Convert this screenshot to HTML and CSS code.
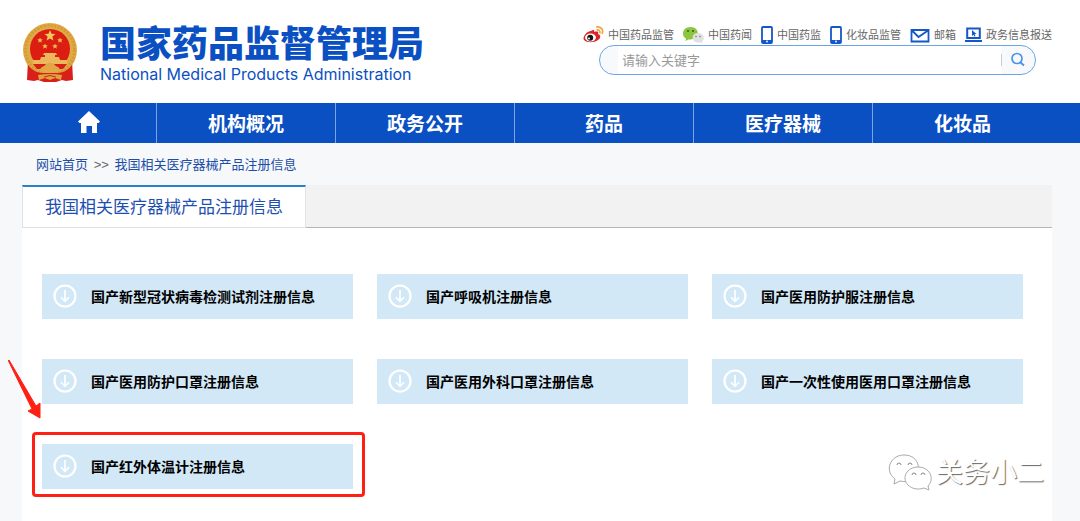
FILE: index.html
```html
<!DOCTYPE html>
<html lang="zh-CN">
<head>
<meta charset="utf-8">
<meta name="viewport" content="width=device-width, initial-scale=1">
<title>国家药品监督管理局</title>
<link rel="stylesheet" href="styles.css">
</head>
<body>
<svg class="defs" width="0" height="0" aria-hidden="true">
  <symbol id="phone" viewBox="0 0 12 18"><rect x="1" y="1" width="10" height="16" rx="1" fill="#fff" stroke="#1557c8" stroke-width="1.8"/><path d="M1 14h10v3H1z" fill="#1557c8"/><circle cx="6" cy="15.500" r=".9" fill="#fff"/></symbol>
  <symbol id="down" viewBox="0 0 24 24"><circle cx="12" cy="12" r="10.500" fill="none" stroke="#fff" stroke-width="2.200"/><path d="M12 6v11M8 13.300l4 4 4-4" fill="none" stroke="#fff" stroke-width="1.600"/></symbol>
</svg>

<header class="header wrap">
  <a class="brand" href="#">
    <svg class="emblem" viewBox="0 0 56 60" aria-hidden="true">
      <path d="M6 38L5 58l7 1 4-1 6 2h12l6-2 4 1 7-1-1-20z" fill="#d91f19"/>
      <circle cx="28" cy="28" r="27" fill="#e0aa45"/>
      <circle cx="28" cy="28" r="24.500" fill="none" stroke="#d39a38" stroke-width="3" stroke-dasharray="2 1.500"/>
      <circle cx="28" cy="27" r="20" fill="#dc1d12"/>
      <path d="M28 8l1.500 3.800 4 .2-3.100 2.600 1 4L28 16.400l-3.400 2.200 1-4-3.100-2.600 4-.2z" fill="#f4c95c"/>
      <g fill="#efbd50"><path id="star" d="M18 15.500l.8 1.800 2 .1-1.500 1.300.5 2-1.800-1.100-1.800 1.100.5-2-1.500-1.300 2-.1z"/><use href="#star" x="20"/><use href="#star" x="5" y="6"/><use href="#star" x="15" y="6"/></g>
      <path d="M22 31h12l1 2h-2v2h4l1 3h7v4H11v-4h7l1-3h4v-2h-2z" fill="#edb85b"/>
      <path d="M11 42h34l-4 5H15z" fill="#d72017"/>
      <path d="M18 48c1-4 4-3 5-5 3-3 7-3 10 0 1 2 4 1 5 5z" fill="#e2a744"/>
      <path d="M6 43q5 7 14 8h16q9-1 14-8v14l-8 1H14l-8-1z" fill="#d91f19"/>
      <path d="M16 53q12-2 24 0l-1 5-6-2-5 2-5-2-6 2z" fill="#dda541"/>
      <path d="M22 55q6-3 12 0" stroke="#c7281a" fill="none"/>
    </svg>
    <span class="brand-text">
      <span class="brand-cn">国家药品监督管理局</span>
      <span class="brand-en">National Medical Products Administration</span>
    </span>
  </a>
  <div class="tools">
    <nav class="quick" aria-label="快捷链接">
      <a href="#"><svg width="21" height="18" viewBox="0 0 21 18" aria-hidden="true"><path d="M8 5c2-2 4-1 3 1 4-1 5 0 4 2 3 1 3 4 0 6-4 3-11 3-14 0C-1 11 4 5 8 5z" fill="#d9252a"/><ellipse cx="7.500" cy="11.500" rx="5.500" ry="4" fill="#fff"/><circle cx="7.200" cy="11.800" r="3" fill="#151515"/><circle cx="6" cy="12.500" r="1" fill="#fff"/><path d="M13 1c5-1 8 3 6 7M13.500 4c2.500-.5 4 1 3.300 3.400" fill="none" stroke="#f2a33a" stroke-width="1.600"/></svg><span>中国药品监管</span></a>
      <a href="#"><svg width="21" height="18" viewBox="0 0 21 18" aria-hidden="true"><path d="M7.500 1C-1 1-2 10 3 12.500L2.500 15l3-1.600C17 15 18 1 7.500 1z" fill="#8cc63f"/><circle cx="5" cy="5" r="1" fill="#385a1c"/><circle cx="10" cy="5" r="1" fill="#385a1c"/><path d="M15 7c-7 0-7 9-.5 9.500l3-.1 2 1.100-.5-2C22.500 13 21 7 15 7z" fill="#e1e1e1"/><circle cx="13" cy="10.500" r=".8" fill="#777"/><circle cx="17" cy="10.500" r=".8" fill="#777"/></svg><span>中国药闻</span></a>
      <a href="#"><svg width="12" height="18" aria-hidden="true"><use href="#phone"/></svg><span>中国药监</span></a>
      <a href="#"><svg width="12" height="18" aria-hidden="true"><use href="#phone"/></svg><span>化妆品监管</span></a>
      <a href="#"><svg width="20" height="18" viewBox="0 0 20 18" aria-hidden="true"><path d="M1.500 4h17v11.500h-17zM2 4.500l6.500 6.500L18 4.500" fill="none" stroke="#1557c8" stroke-width="1.800"/></svg><span>邮箱</span></a>
      <a href="#"><svg width="17" height="18" viewBox="0 0 17 18" aria-hidden="true"><path d="M2.200 2.500h12.600v9.500H2.200zM0 15h17" fill="none" stroke="#1557c8" stroke-width="2"/><path d="M7 4v6l1.500-1.300 1 2 1-.6-1-1.800 2-.2z" fill="#1557c8"/></svg><span>政务信息报送</span></a>
    </nav>
    <form class="search" role="search">
      <input type="search" aria-label="搜索" placeholder="请输入关键字">
      <button type="button" aria-label="搜索"><svg width="16" height="16" viewBox="0 0 16 16" aria-hidden="true"><circle cx="7" cy="6.500" r="5" fill="none" stroke="#4a95e8" stroke-width="1.700"/><path d="M10.500 10.500l3.500 3" stroke="#4a95e8" stroke-width="2"/></svg></button>
    </form>
  </div>
</header>

<nav class="mainnav" aria-label="主导航">
  <div class="mainnav-row wrap">
    <a href="#" aria-label="首页"><svg width="24" height="22" viewBox="0 0 24 22" aria-hidden="true"><path d="M12 0l11 10.500-1.500 1.500H20v10h-5v-7H9.500v7H4V12H2.500L1 10.500z" fill="#fff"/></svg></a>
    <a href="#">机构概况</a>
    <a href="#">政务公开</a>
    <a href="#">药品</a>
    <a href="#">医疗器械</a>
    <a href="#">化妆品</a>
  </div>
</nav>

<div class="page wrap">
  <nav class="crumbs" aria-label="当前位置"><a href="#">网站首页</a> <span>&gt;&gt;</span> <a href="#">我国相关医疗器械产品注册信息</a></nav>
  <main class="content">
    <div class="tabbar"><h1 class="tab">我国相关医疗器械产品注册信息</h1></div>
    <div class="cards">
      <a class="card" href="#"><svg aria-hidden="true"><use href="#down"/></svg>国产新型冠状病毒检测试剂注册信息</a>
      <a class="card" href="#"><svg aria-hidden="true"><use href="#down"/></svg>国产呼吸机注册信息</a>
      <a class="card" href="#"><svg aria-hidden="true"><use href="#down"/></svg>国产医用防护服注册信息</a>
      <a class="card" href="#"><svg aria-hidden="true"><use href="#down"/></svg>国产医用防护口罩注册信息</a>
      <a class="card" href="#"><svg aria-hidden="true"><use href="#down"/></svg>国产医用外科口罩注册信息</a>
      <a class="card" href="#"><svg aria-hidden="true"><use href="#down"/></svg>国产一次性使用医用口罩注册信息</a>
      <div class="marked">
        <a class="card" href="#"><svg aria-hidden="true"><use href="#down"/></svg>国产红外体温计注册信息</a>
        <svg class="arrow" viewBox="0 0 34 60" aria-hidden="true"><path d="M0 0l1 0L28 46l4-3v15L20 51l4-2z" fill="#ff2014" stroke="#ff2014"/></svg>
      </div>
    </div>
    <div class="watermark">
      <svg width="44" height="38" viewBox="0 0 44 38" aria-hidden="true"><g fill="#fff" stroke="#aaa" stroke-width="1"><path d="M16 1C2 1-4 17 7 25l-1 5 6-3c5 1 8 1 12-1 10-6 9-25-8-25z"/><path d="M30 13c-11 0-17 11-10 18 4 4 10 5 16 3l5 2-1-4c7-7 2-19-10-19z"/></g><g fill="none" stroke="#888"><path d="M9 11a2 2 0 0 1 4 0M20 11a2 2 0 0 1 4 0M24 21a2 2 0 0 1 4 0M33 21a2 2 0 0 1 4 0"/></g></svg>
      <span>关务小二</span>
    </div>
  </main>
</div>
</body>
</html>
```
FILE: styles.css
```css
* { box-sizing: border-box; }

body {
  margin: 0;
  min-height: 100vh;
  display: flex;
  flex-direction: column;
  background: #f6f8fa;
  color: #000;
  font-family: "Liberation Sans", "Noto Sans CJK SC", sans-serif;
}

a { color: inherit; text-decoration: none; }
svg { display: block; flex: none; }
.defs { position: absolute; }
.wrap { padding-left: 22px; padding-right: 28px; }

.header {
  display: flex;
  justify-content: space-between;
  background: #fff;
  padding-bottom: 21px;
}

.brand { display: flex; gap: 22px; padding-top: 22px; color: #0b50c2; }
.emblem { width: 56px; height: 60px; }
.brand-text { display: flex; flex-direction: column; padding-top: 2px; white-space: nowrap; }
.brand-cn { font-size: 36px; font-weight: 900; line-height: 42px; }
.brand-en { font-family: Inter, sans-serif; font-size: 16px; line-height: 16px; }

.tools { display: flex; flex-direction: column; gap: 1px; padding-top: 25px; }
.quick { display: flex; justify-content: space-between; gap: 9px; font-size: 11px; line-height: 18px; color: #666; white-space: nowrap; }
.quick a { display: flex; align-items: center; gap: 4px; padding-top: 1px; }
.quick svg { margin-top: -1px; }

.search {
  display: flex;
  height: 30px;
  margin: 0 16px;
  border: 1px solid #6aa5ea;
  border-radius: 16px;
  background: #f8f9fa;
  overflow: hidden;
}
.search input {
  flex: 1;
  min-width: 0;
  margin-left: 18px;
  padding: 0 4px;
  border: 0;
  outline: 0;
  background: #fff;
  font: 13px "Liberation Sans", "Noto Sans CJK SC", sans-serif;
}
.search input::placeholder { color: #999; }
.search button {
  display: flex;
  align-items: center;
  width: 34px;
  padding: 0 0 0 9px;
  border: 0;
  background: linear-gradient(#ccc, #ccc) 0 50% / 1px 12px no-repeat;
}

.mainnav { background: #0b50c2; }
.mainnav-row { display: grid; grid-template-columns: 135fr repeat(5, 179fr); }
.mainnav-row a {
  display: flex;
  align-items: center;
  justify-content: center;
  height: 40px;
  padding-bottom: 2px;
  border-right: 1px solid #7ea4e0;
  color: #fff;
  font-size: 19px;
  font-weight: 700;
}
.mainnav-row a:last-child { border-right: 0; }

.page { flex: 1; display: flex; flex-direction: column; }
.crumbs { padding: 2px 14px 0; font-size: 13px; line-height: 40px; color: #666; }
.crumbs span { margin: 0 2px; }
.crumbs a { color: #1d4fa8; }
.content { flex: 1; position: relative; background: #fff; }

.tabbar { display: flex; background: #f2f2f2; border-bottom: 1px solid #b5b5b5; }
.tab {
  margin: 0 0 -1px;
  padding: 2px 22px 0;
  border: 1px solid #e2e2e2;
  border-top: 2px solid #2683c6;
  background: #fff;
  color: #1d4fb0;
  font-size: 17px;
  font-weight: 400;
  line-height: 38px;
}

.cards {
  display: grid;
  grid-template-columns: repeat(3, 1fr);
  gap: 40px 24px;
  padding: 46px 29px 32px 20px;
}
.card {
  display: flex;
  align-items: center;
  gap: 14px;
  height: 45px;
  padding: 0 11px 2px;
  background: #d2e8f7;
  font-size: 14px;
  font-weight: 700;
  white-space: nowrap;
}
.card svg { width: 24px; height: 24px; }

.marked { position: relative; }
.marked::after {
  content: "";
  position: absolute;
  inset: -12px -12px -8px -10px;
  border: 3px solid #ff2014;
  border-radius: 4px;
  pointer-events: none;
}
.arrow { position: absolute; left: -34px; top: -84px; width: 34px; height: 60px; }

.watermark {
  position: absolute;
  right: 8px;
  bottom: 28px;
  display: flex;
  align-items: center;
  gap: 4px;
  color: #fff;
  font-size: 27px;
  line-height: 40px;
  text-shadow: 1px 1px 1px #666;
}
```
